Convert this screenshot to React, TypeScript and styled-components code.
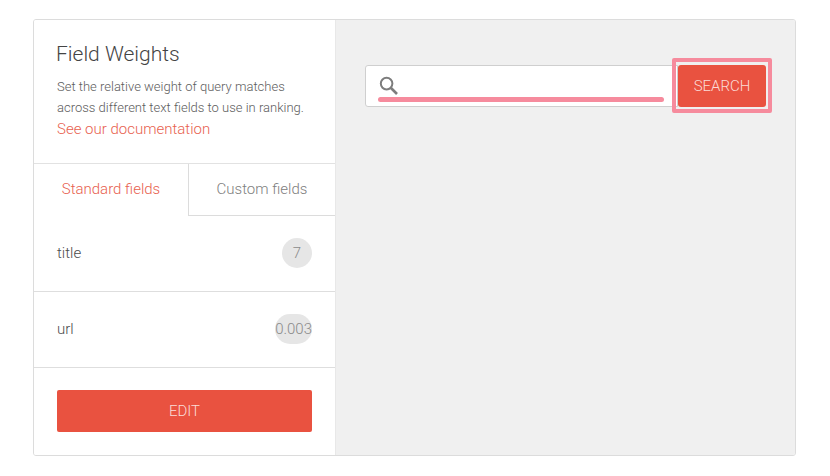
import { createGlobalStyle } from "styled-components";
import styled from "styled-components";

const fields = [
  { name: "title", weight: "7" },
  { name: "url", weight: "0.003" },
];

const App = () => {
  return (
    <>
      <GlobalStyle />
      <Page>
        <Card>
          <Sidebar>
            <Intro>
              <Title>Field Weights</Title>
              <Description>
                Set the relative weight of query matches
                <br />
                across different text fields to use in ranking.
              </Description>
              <DocLink>See our documentation</DocLink>
            </Intro>
            <Tabs>
              <Tab $active>Standard fields</Tab>
              <Tab>Custom fields</Tab>
            </Tabs>
            {fields.map((field) => (
              <FieldRow key={field.name}>
                <FieldName>{field.name}</FieldName>
                <WeightBadge>{field.weight}</WeightBadge>
              </FieldRow>
            ))}
            <Footer>
              <EditButton>EDIT</EditButton>
            </Footer>
          </Sidebar>
          <Main>
            <SearchBar>
              <SearchField>
                <svg width="20" height="20" viewBox="0 0 20 20" fill="none" stroke="#7d7d7d">
                  <circle cx="7.6" cy="7.6" r="5.8" strokeWidth="2" />
                  <path d="M12 12l6 6" strokeWidth="2.6" />
                </svg>
                <Underline />
              </SearchField>
              <SearchButton>SEARCH</SearchButton>
              <Highlight />
            </SearchBar>
          </Main>
        </Card>
      </Page>
    </>
  );
};

export default App;

const GlobalStyle = createGlobalStyle`
  html, body {
    margin: 0;
    background: #fff;
    font-family: Roboto, "Liberation Sans", sans-serif;
  }
`;

const Page = styled.div`
  width: 830px;
  height: 476px;
  padding: 19px 34px 0 33px;
  box-sizing: border-box;
`;

const Card = styled.div`
  display: flex;
  height: 437px;
  border: 1px solid #dcdcdc;
  border-radius: 3px;
  box-sizing: border-box;
  overflow: hidden;
`;

const Sidebar = styled.div`
  width: 301px;
  flex-shrink: 0;
  display: flex;
  flex-direction: column;
  background: #fff;
  border-right: 1px solid #e8e8e8;
  box-sizing: content-box;
`;

const Intro = styled.div`
  height: 144px;
  padding: 21px 23px 0 22px;
  box-sizing: border-box;
  border-bottom: 1px solid #e2e2e2;
`;

const Title = styled.h2`
  margin: 0 0 9px;
  font-size: 21px;
  line-height: 26px;
  font-weight: 300;
  color: #444;
`;

const Description = styled.p`
  margin: 0 0 0 1px;
  font-size: 13px;
  line-height: 21px;
  font-weight: 300;
  color: #5c5c5c;
  white-space: nowrap;
`;

const DocLink = styled.a`
  display: block;
  margin: 1px 0 0 1px;
  font-size: 15px;
  line-height: 21px;
  font-weight: 300;
  color: #e8614f;
`;

const Tabs = styled.div`
  display: flex;
  height: 52px;
`;

const Tab = styled.div<{ $active?: boolean }>`
  width: ${(p) => (p.$active ? "154px" : "147px")};
  display: flex;
  align-items: center;
  justify-content: center;
  padding-bottom: 2px;
  box-sizing: border-box;
  font-size: 15px;
  font-weight: 300;
  color: ${(p) => (p.$active ? "#e8614f" : "#808080")};
  border-left: ${(p) => (p.$active ? "none" : "1px solid #dcdcdc")};
  border-bottom: ${(p) => (p.$active ? "none" : "1px solid #dcdcdc")};
`;

const FieldRow = styled.div`
  height: 76px;
  padding: 0 23px 2px;
  display: flex;
  align-items: center;
  justify-content: space-between;
  box-sizing: border-box;
  border-bottom: 1px solid #dedede;
`;

const FieldName = styled.span`
  font-size: 15px;
  font-weight: 300;
  color: #4c4c4c;
`;

const WeightBadge = styled.span`
  min-width: 30px;
  height: 30px;
  border-radius: 15px;
  background: #e6e6e6;
  display: flex;
  align-items: center;
  justify-content: center;
  font-size: 15px;
  font-weight: 300;
  color: #8a8a8a;
`;

const Footer = styled.div`
  flex: 1;
  padding: 22px 23px 0;
`;

const EditButton = styled.button`
  width: 100%;
  height: 42px;
  border: none;
  border-radius: 2px;
  background: #e95240;
  color: #fbdcd7;
  font-family: inherit;
  font-size: 15px;
  font-weight: 300;
`;

const Main = styled.div`
  flex: 1;
  background: #f0f0f0;
  padding: 45px 0 0 29px;
`;

const SearchBar = styled.div`
  position: relative;
  display: flex;
  align-items: center;
  height: 42px;
`;

const SearchField = styled.div`
  position: relative;
  width: 313px;
  height: 42px;
  display: flex;
  align-items: center;
  padding-left: 13px;
  box-sizing: border-box;
  background: #fff;
  border: 1px solid #cfcfcf;
  border-radius: 3px 0 0 3px;
`;

const Underline = styled.div`
  position: absolute;
  left: 12px;
  right: 13px;
  bottom: 4px;
  height: 5px;
  border-radius: 3px;
  background: #f68b9d;
`;

const SearchButton = styled.button`
  width: 88px;
  height: 42px;
  border: none;
  border-radius: 3px;
  background: #e95240;
  color: #fbdcd7;
  font-family: inherit;
  font-size: 15px;
  font-weight: 300;
`;

const Highlight = styled.div`
  position: absolute;
  left: 307px;
  top: -7px;
  width: 100px;
  height: 55px;
  box-sizing: border-box;
  border: 4px solid #f68b9d;
  border-radius: 2px;
  pointer-events: none;
`;
